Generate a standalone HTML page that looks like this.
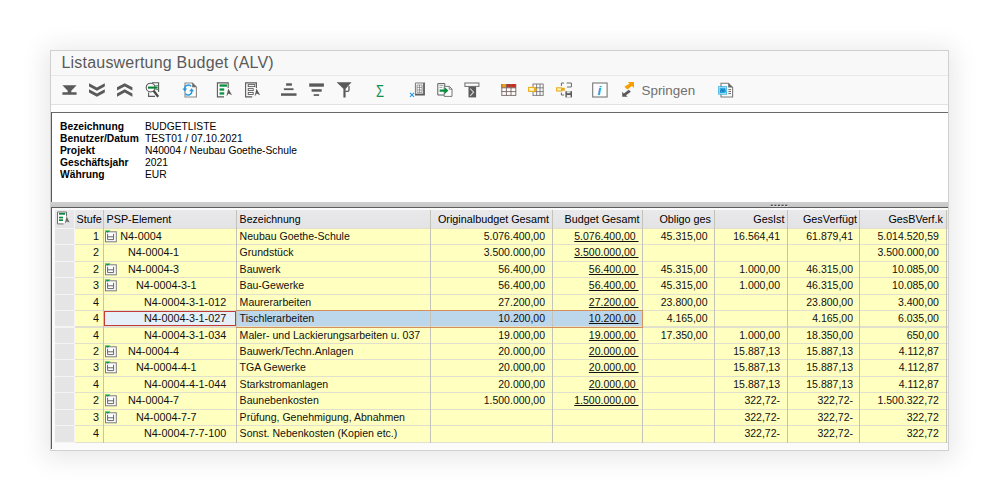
<!DOCTYPE html>
<html><head><meta charset="utf-8"><title>Listauswertung Budget (ALV)</title>
<style>
html,body{margin:0;padding:0;background:#fff;}
body{width:1000px;height:500px;position:relative;overflow:hidden;font-family:"Liberation Sans",sans-serif;font-size:10.8px;color:#111;}
.a{position:absolute;}
#panel{left:50px;top:50px;width:897px;height:398.5px;background:#fdfdfd;border:1px solid #d0d0d0;box-shadow:0 3px 24px 5px rgba(0,0,0,0.095);}
#title{left:51px;top:51px;width:897px;height:24px;background:#f8f8f8;border-bottom:1px solid #e8e8e8;}
#title span{position:absolute;left:10.5px;top:3px;font-size:16px;color:#5a5a5a;letter-spacing:0.2px;white-space:nowrap;}
#tb{left:51px;top:76px;width:897px;height:28px;background:#f9f9f9;border-bottom:1px solid #e2e2e2;}
#spr{left:641.5px;top:83px;font-size:13.4px;color:#707070;line-height:16px;white-space:nowrap;}
#sig{left:375.6px;top:82px;font-size:16.3px;color:#0d9150;line-height:18px;transform:scaleX(0.8);transform-origin:0 0;}
#info{left:51px;top:112px;width:896px;height:89px;background:#fff;border-top:1.5px solid #6a6a6a;border-left:1.5px solid #5a5a5a;}
#info div{position:absolute;left:8px;white-space:nowrap;line-height:12px;height:12px;font-size:11px;color:#000;transform:scaleX(0.934);transform-origin:0 0;}
#info b{position:absolute;left:0;}
#info i{position:absolute;left:91px;font-style:normal;}
#split{left:51px;top:201.7px;width:897px;height:5.2px;background:linear-gradient(#d0d0d0,#c6c6c6);}
#gridbox{left:51px;top:206.7px;width:897px;height:242.8px;background:#fbfbfb;border-top:1.3px solid #5e5e5e;border-left:1.5px solid #5a5a5a;box-sizing:border-box;}
#lines{background:#e0e0cc;}
.vl{top:210px;width:1px;background:#c3c3ba;}
.hd{top:210px;height:18px;background:linear-gradient(#e9e9eb,#e3e3e6);line-height:18px;white-space:nowrap;overflow:hidden;color:#000;}
.c{white-space:nowrap;overflow:hidden;background:#ffffc0;}
.c span{display:block;}
.r{text-align:right;}
.u{text-decoration:underline;text-underline-offset:1.2px;text-decoration-skip-ink:none;text-decoration-thickness:1px;white-space:pre;}
.sel{background:#e5e5e5;}
.hl{background:#bcd6ec;}
</style></head><body>
<div class="a" id="panel"></div>
<div class="a" id="title"><span>Listauswertung Budget (ALV)</span></div>
<div class="a" id="tb"></div>

<svg class="a" style="left:0;top:0" width="1000" height="500" viewBox="0 0 1000 500">
<path fill="#5a5a5a" d="M62.4 85.3H76.6L71.3 90.8V92.2H76.6V94.7H62.4V92.2H67.7V90.8Z"/>
<path fill="#5a5a5a" d="M89 83.2L96.9 87.4L104.8 83.2V86.6L96.9 90.8L89 86.6Z"/>
<path fill="#5a5a5a" d="M89 89.3L96.9 93.5L104.8 89.3V92.6L96.9 96.8L89 92.6Z"/>
<path fill="#5a5a5a" d="M117 90.6L124.7 86.5L132.4 90.6V87.3L124.7 83.2L117 87.3Z"/>
<path fill="#5a5a5a" d="M117 96.7L124.7 92.6L132.4 96.7V93.4L124.7 89.3L117 93.4Z"/>
<g fill="none" stroke="#5a5a5a" stroke-width="1.1"><path d="M152 82.8H158.6V92"/><path d="M148.6 92.6V96.4H155"/><circle cx="150.6" cy="87.6" r="4.4"/></g>
<path d="M153.6 90.8L158.2 96.8" stroke="#4a4a4a" stroke-width="2.3" fill="none"/>
<path d="M148 87.6H157.6" stroke="#0a8236" stroke-width="2.1"/><path d="M155.4 85.6H158M155.4 89.6H158" stroke="#2a9a5a" stroke-width="0.9"/>
<path d="M185 83H192.4L196.4 87V97H185Z" fill="#fdfdfd" stroke="#8a8a8a" stroke-width="1.1"/><path d="M192.2 82.8L196.6 87.2H192.2Z" fill="#6a6a6a"/>
<g fill="none" stroke="#2498de" stroke-width="1.45"><path d="M184.7 89.4A3.7 3.7 0 0 1 191.2 86.4"/><path d="M191.7 90.4A3.7 3.7 0 0 1 185.4 93.8"/></g>
<path d="M182.4 88.6H187.2L184.8 91.6Z" fill="#2498de"/><path d="M189.2 91.2H194L191.6 88.2Z" fill="#2498de"/>
<path d="M228.20000000000002 88V82.9H217.4V96.9H224.0" fill="none" stroke="#5a5a5a" stroke-width="1.1"/>
<rect x="219.6" y="84.4" width="7.4" height="2.3" fill="#0a8f3e"/><rect x="219.6" y="88.4" width="4.6" height="2.3" fill="#0a8f3e"/><rect x="219.6" y="92.3" width="4.6" height="2.3" fill="#0a8f3e"/>
<path d="M228.3 88.6L232.0 95.2L228.6 93.6L226.4 96.4Z" fill="#5a5a5a"/>
<path d="M256.4 88V82.9H245.6V96.9H252.2" fill="none" stroke="#5a5a5a" stroke-width="1.1"/>
<g fill="#fff" stroke="#5a5a5a" stroke-width="0.9"><rect x="248.2" y="84.6" width="6.6" height="2"/><rect x="248.2" y="88.6" width="5" height="2"/><rect x="248.2" y="92.5" width="5" height="2"/></g>
<path d="M256.5 88.6L260.2 95.2L256.8 93.6L254.6 96.4Z" fill="#5a5a5a"/>
<g fill="#5a5a5a"><rect x="286.1" y="83.3" width="5.8" height="2.4"/><rect x="283.9" y="88.3" width="9.6" height="1.8"/><rect x="281" y="93.3" width="15.5" height="2.5"/></g>
<g fill="#5a5a5a"><rect x="309.2" y="83.4" width="14.7" height="3.3"/><rect x="311.6" y="89.2" width="10.1" height="2.5"/><rect x="313.7" y="94.2" width="5.4" height="1.7"/></g>
<path d="M336.6 82.2H351.6L345.6 88.8V97.6H343.4V88.8Z" fill="#5a5a5a"/><path d="M345.4 91.4H347.6Q349 91.4 349 90V86" stroke="#5a5a5a" stroke-width="1.3" fill="none"/>
<path d="M415.4 83H423.4V94H415.4Z" fill="#fff" stroke="#777" stroke-width="1"/><path d="M424.2 82.6V94.8H415" stroke="#5a5a5a" stroke-width="1.4" fill="none"/>
<path d="M417 85H422V92.4H417ZM417 87.4H422M417 90H422M419.5 85V92.4" stroke="#808080" stroke-width="0.8" fill="none"/>
<path d="M410 92.8L414 96.8M414 92.8L410 96.8" stroke="#2a9be8" stroke-width="1.2"/>
<path d="M437.8 83.6H444.8V95H437.8Z" fill="#fcfcfc" stroke="#5a5a5a" stroke-width="1"/><path d="M439.4 85.4H443.4M439.4 87.4H442.4" stroke="#888" stroke-width="0.8"/>
<path d="M444.2 86.4H449.4L452 89V96.4H444.2Z" fill="#fcfcfc" stroke="#777" stroke-width="1"/><path d="M449.2 86.4V89.2H452" stroke="#777" stroke-width="0.9" fill="none"/>
<path d="M439.6 89.4H444.6V87L448.4 90.6L444.6 94.2V91.8H439.6Z" fill="#0a8f3e"/>
<rect x="464.9" y="83" width="14" height="3.4" fill="#fff" stroke="#777" stroke-width="1.1"/><rect x="468.5" y="86.8" width="7.6" height="10.6" fill="#5a5a5a"/><path d="M470.2 88.6L473.6 92.2L470.2 95.8" stroke="#cfcfcf" stroke-width="1.2" fill="none"/>
<rect x="501.4" y="84" width="14.6" height="11.6" fill="#fff"/><rect x="501.4" y="84" width="5" height="3.6" fill="#f0a010"/><rect x="506.4" y="84" width="9.6" height="3.6" fill="#c8301c"/>
<path d="M501.6 87.8H516M501.6 91.6H516M501.6 95.4H516M501.8 84V95.6M506.4 84V95.6M511 84V95.6M515.8 84V95.6" stroke="#756262" stroke-width="0.9" fill="none"/>
<path d="M532.6 84H543.4M532.6 87.8H543.4M532.6 91.6H543.4M532.6 95.4H543.4M533 84V95.6M536.6 84V95.6M540 84V95.6M543.2 84V95.6" stroke="#707070" stroke-width="0.85" fill="none"/>
<rect x="528.6" y="87.4" width="6" height="4" fill="#fff3c0" stroke="#e8b020" stroke-width="1.1"/><path d="M534 87L537.4 89.4L534 91.8Z" fill="#e8a818"/>
<rect x="556.6" y="87.8" width="5" height="3.2" fill="#fff3c0" stroke="#e8b020" stroke-width="1.1"/><path d="M561.4 87.8H564.8V90.8H561.4Z" fill="#e8a818"/>
<path d="M561.4 86V83H564M566.6 83H571.4V87H567M561.4 92.6V95H564" stroke="#6a6a6a" stroke-width="1" fill="none"/>
<rect x="565.4" y="91.2" width="6.6" height="6.2" fill="#5a5a5a"/><rect x="566.8" y="91.2" width="3.6" height="2" fill="#ddd"/><rect x="566.8" y="95" width="3.8" height="2.4" fill="#eee"/>
<rect x="592.7" y="83" width="14.4" height="14" fill="#fdfdfd" stroke="#777" stroke-width="1.1"/>
<text x="599.4" y="94.8" text-anchor="middle" font-family="Liberation Sans, sans-serif" font-style="italic" font-weight="bold" font-size="13.5" fill="#18a2e2">i</text>
<path d="M627.8 82H634V88L631.9 86L627.4 89.6L624.4 86.8L629.6 83.6Z" fill="#f5a000"/>
<path d="M622.2 96.8V91.8L623.9 93.4L628.8 89.8L630.8 91.8L626 95.2L627.6 96.8Z" fill="#5a5a5a"/>
<path d="M721 83.2H728.4L732.6 87.4V97H721Z" fill="#fdfdfd" stroke="#7a7a7a" stroke-width="1.1"/><path d="M728.2 83L732.8 87.6H728.2Z" fill="#666"/>
<path d="M728.4 89.6H731M728.4 91.6H731M728.4 93.6H731" stroke="#555" stroke-width="0.9"/>
<rect x="718.2" y="86.2" width="8.8" height="8.4" fill="#30aee2"/><rect x="719.3" y="87.3" width="6.6" height="6.2" fill="none" stroke="#c8ecf8" stroke-width="0.7"/><path d="M720.2 92.4L721.8 89L723 92L724.4 89L725.4 91.6" stroke="#1a78b8" stroke-width="1" fill="none"/>
</svg>
<div class="a" id="sig">Σ</div>
<div class="a" id="spr">Springen</div>
<div class="a" id="info">
<div style="top:7px"><b>Bezeichnung</b><i>BUDGETLISTE</i></div>
<div style="top:19.1px"><b>Benutzer/Datum</b><i>TEST01 / 07.10.2021</i></div>
<div style="top:31.2px"><b>Projekt</b><i>N40004 / Neubau Goethe-Schule</i></div>
<div style="top:43.3px"><b>Geschäftsjahr</b><i>2021</i></div>
<div style="top:55.4px"><b>Währung</b><i>EUR</i></div>
</div>
<div class="a" id="split"></div>
<svg class="a" style="left:769px;top:203px" width="20" height="5" viewBox="0 0 20 5"><rect x="2.3" y="2.6" width="2.2" height="1.1" fill="#f4f4f4"/><rect x="1.8" y="1.7" width="2.1" height="1.2" fill="#3c3c3c"/><rect x="5.9" y="2.6" width="2.2" height="1.1" fill="#f4f4f4"/><rect x="5.4" y="1.7" width="2.1" height="1.2" fill="#3c3c3c"/><rect x="9.5" y="2.6" width="2.2" height="1.1" fill="#f4f4f4"/><rect x="9.0" y="1.7" width="2.1" height="1.2" fill="#3c3c3c"/><rect x="13.1" y="2.6" width="2.2" height="1.1" fill="#f4f4f4"/><rect x="12.6" y="1.7" width="2.1" height="1.2" fill="#3c3c3c"/><rect x="16.7" y="2.6" width="2.2" height="1.1" fill="#f4f4f4"/><rect x="16.2" y="1.7" width="2.1" height="1.2" fill="#3c3c3c"/></svg>
<div class="a" id="gridbox"></div>

<div class="a" id="lines" style="left:74px;top:210px;width:874px;height:232.77px"></div>
<div class="a" style="left:55px;top:210px;width:20px;height:232.77px;background:#f4f4f4"></div>
<div class="a vl" style="left:103px;height:232.77px"></div>
<div class="a vl" style="left:236px;height:232.77px"></div>
<div class="a vl" style="left:430px;height:232.77px"></div>
<div class="a vl" style="left:551.5px;height:232.77px"></div>
<div class="a vl" style="left:642px;height:232.77px"></div>
<div class="a vl" style="left:714px;height:232.77px"></div>
<div class="a vl" style="left:787px;height:232.77px"></div>
<div class="a vl" style="left:859px;height:232.77px"></div>
<div class="a vl" style="left:945.5px;height:232.77px"></div>
<div class="a hd" style="left:55px;width:19px;"><span style="padding-left:0px"></span></div>
<div class="a hd" style="left:75px;width:28px;"><span style="padding-left:1.5px">Stufe</span></div>
<div class="a hd" style="left:104px;width:132px;"><span style="padding-left:2.5px">PSP-Element</span></div>
<div class="a hd" style="left:237px;width:193px;"><span style="padding-left:2.6px;font-size:10.55px">Bezeichnung</span></div>
<div class="a hd r" style="left:431px;width:120.5px;"><span style="padding-right:2.5px">Originalbudget Gesamt</span></div>
<div class="a hd r" style="left:552.5px;width:89.5px;"><span style="padding-right:2.5px">Budget Gesamt</span></div>
<div class="a hd r" style="left:643px;width:71px;"><span style="padding-right:3px">Obligo ges</span></div>
<div class="a hd r" style="left:715px;width:72px;"><span style="padding-right:2.5px">GesIst</span></div>
<div class="a hd r" style="left:788px;width:71px;"><span style="padding-right:2px">GesVerfügt</span></div>
<div class="a hd r" style="left:860px;width:85.5px;"><span style="padding-right:2.5px">GesBVerf.k</span></div>
<div class="a hd" style="left:946.5px;width:1.5px"></div>
<svg class="a" style="left:55px;top:209px" width="19" height="19" viewBox="55 209 19 19"><path d="M66.5 216.4V212H57.5V223.9H63.6" fill="#fff" stroke="#707070" stroke-width="1"/><rect x="59" y="212.9" width="6.2" height="1.8" fill="#0a8a3c"/><rect x="59" y="216.7" width="4" height="1.7" fill="#0a8a3c"/><rect x="59" y="219.3" width="4" height="1.7" fill="#0a8a3c"/><path d="M66.6 216.2L69.6 222.6L66.8 221.4L64.9 223.4Z" fill="#6a6a6a"/></svg>
<div class="a c sel" style="top:228.70px;height:15.47px;line-height:14.17px;left:55px;width:19px"></div>
<div class="a c r" style="top:228.70px;height:15.47px;line-height:14.17px;left:75px;width:28px"><span style="padding-right:4px">1</span></div>
<div class="a c" style="top:228.70px;height:15.47px;line-height:14.17px;left:104px;width:132px"><span style="position:absolute;left:16.299999999999997px">N4-0004</span></div>
<svg class="a" style="left:104px;top:228.7px" width="14" height="16" viewBox="104 228.7 14 16"><rect x="105.5" y="231.5" width="10.8" height="10" fill="#fff" stroke="#7a7a80" stroke-width="1"/><path d="M107.6 233.5V239.3H113.6V233.5M107.6 236.5H113.6" fill="none" stroke="#666" stroke-width="1"/><path d="M104.6 230.1H110.6L107.6 232.5Z" fill="#0a9a48"/></svg>
<div class="a c" style="top:228.70px;height:15.47px;line-height:14.17px;left:237px;width:193px"><span style="padding-left:2.6px;font-size:10.55px">Neubau Goethe-Schule</span></div>
<div class="a c r" style="top:228.70px;height:15.47px;line-height:14.17px;left:431px;width:120.5px"><span style="padding-right:6.5px;font-size:10.5px">5.076.400,00</span></div>
<div class="a c r" style="top:228.70px;height:15.47px;line-height:14.17px;left:552.5px;width:89.5px"><span style="padding-right:3.5px;font-size:10.5px"><span class="u" style="display:inline">5.076.400,00 </span></span></div>
<div class="a c r" style="top:228.70px;height:15.47px;line-height:14.17px;left:643px;width:71px"><span style="padding-right:6.5px;font-size:10.5px">45.315,00</span></div>
<div class="a c r" style="top:228.70px;height:15.47px;line-height:14.17px;left:715px;width:72px"><span style="padding-right:7px;font-size:10.5px">16.564,41</span></div>
<div class="a c r" style="top:228.70px;height:15.47px;line-height:14.17px;left:788px;width:71px"><span style="padding-right:6px;font-size:10.5px">61.879,41</span></div>
<div class="a c r" style="top:228.70px;height:15.47px;line-height:14.17px;left:860px;width:85.5px"><span style="padding-right:6.7px;font-size:10.5px">5.014.520,59</span></div>
<div class="a c" style="top:228.70px;height:15.47px;line-height:14.17px;left:946.5px;width:1.5px"></div>
<div class="a c sel" style="top:245.17px;height:15.47px;line-height:14.29px;left:55px;width:19px"></div>
<div class="a c r" style="top:245.17px;height:15.47px;line-height:14.29px;left:75px;width:28px"><span style="padding-right:4px">2</span></div>
<div class="a c" style="top:245.17px;height:15.47px;line-height:14.29px;left:104px;width:132px"><span style="position:absolute;left:24px">N4-0004-1</span></div>
<div class="a c" style="top:245.17px;height:15.47px;line-height:14.29px;left:237px;width:193px"><span style="padding-left:2.6px;font-size:10.55px">Grundstück</span></div>
<div class="a c r" style="top:245.17px;height:15.47px;line-height:14.29px;left:431px;width:120.5px"><span style="padding-right:6.5px;font-size:10.5px">3.500.000,00</span></div>
<div class="a c r" style="top:245.17px;height:15.47px;line-height:14.29px;left:552.5px;width:89.5px"><span style="padding-right:3.5px;font-size:10.5px"><span class="u" style="display:inline">3.500.000,00 </span></span></div>
<div class="a c r" style="top:245.17px;height:15.47px;line-height:14.29px;left:643px;width:71px"><span style="padding-right:6.5px;font-size:10.5px"></span></div>
<div class="a c r" style="top:245.17px;height:15.47px;line-height:14.29px;left:715px;width:72px"><span style="padding-right:7px;font-size:10.5px"></span></div>
<div class="a c r" style="top:245.17px;height:15.47px;line-height:14.29px;left:788px;width:71px"><span style="padding-right:6px;font-size:10.5px"></span></div>
<div class="a c r" style="top:245.17px;height:15.47px;line-height:14.29px;left:860px;width:85.5px"><span style="padding-right:6.7px;font-size:10.5px">3.500.000,00</span></div>
<div class="a c" style="top:245.17px;height:15.47px;line-height:14.29px;left:946.5px;width:1.5px"></div>
<div class="a c sel" style="top:261.63px;height:15.47px;line-height:14.42px;left:55px;width:19px"></div>
<div class="a c r" style="top:261.63px;height:15.47px;line-height:14.42px;left:75px;width:28px"><span style="padding-right:4px">2</span></div>
<div class="a c" style="top:261.63px;height:15.47px;line-height:14.42px;left:104px;width:132px"><span style="position:absolute;left:24px">N4-0004-3</span></div>
<svg class="a" style="left:104px;top:261.63px" width="14" height="16" viewBox="104 261.63 14 16"><rect x="105.5" y="264.43" width="10.8" height="10" fill="#fff" stroke="#7a7a80" stroke-width="1"/><path d="M107.6 266.43V272.23H113.6V266.43M107.6 269.43H113.6" fill="none" stroke="#666" stroke-width="1"/><path d="M104.6 263.03000000000003H110.6L107.6 265.43Z" fill="#0a9a48"/></svg>
<div class="a c" style="top:261.63px;height:15.47px;line-height:14.42px;left:237px;width:193px"><span style="padding-left:2.6px;font-size:10.55px">Bauwerk</span></div>
<div class="a c r" style="top:261.63px;height:15.47px;line-height:14.42px;left:431px;width:120.5px"><span style="padding-right:6.5px;font-size:10.5px">56.400,00</span></div>
<div class="a c r" style="top:261.63px;height:15.47px;line-height:14.42px;left:552.5px;width:89.5px"><span style="padding-right:3.5px;font-size:10.5px"><span class="u" style="display:inline">56.400,00 </span></span></div>
<div class="a c r" style="top:261.63px;height:15.47px;line-height:14.42px;left:643px;width:71px"><span style="padding-right:6.5px;font-size:10.5px">45.315,00</span></div>
<div class="a c r" style="top:261.63px;height:15.47px;line-height:14.42px;left:715px;width:72px"><span style="padding-right:7px;font-size:10.5px">1.000,00</span></div>
<div class="a c r" style="top:261.63px;height:15.47px;line-height:14.42px;left:788px;width:71px"><span style="padding-right:6px;font-size:10.5px">46.315,00</span></div>
<div class="a c r" style="top:261.63px;height:15.47px;line-height:14.42px;left:860px;width:85.5px"><span style="padding-right:6.7px;font-size:10.5px">10.085,00</span></div>
<div class="a c" style="top:261.63px;height:15.47px;line-height:14.42px;left:946.5px;width:1.5px"></div>
<div class="a c sel" style="top:278.10px;height:15.47px;line-height:14.54px;left:55px;width:19px"></div>
<div class="a c r" style="top:278.10px;height:15.47px;line-height:14.54px;left:75px;width:28px"><span style="padding-right:4px">3</span></div>
<div class="a c" style="top:278.10px;height:15.47px;line-height:14.54px;left:104px;width:132px"><span style="position:absolute;left:32px">N4-0004-3-1</span></div>
<svg class="a" style="left:104px;top:278.1px" width="14" height="16" viewBox="104 278.1 14 16"><rect x="105.5" y="280.90000000000003" width="10.8" height="10" fill="#fff" stroke="#7a7a80" stroke-width="1"/><path d="M107.6 282.90000000000003V288.70000000000005H113.6V282.90000000000003M107.6 285.90000000000003H113.6" fill="none" stroke="#666" stroke-width="1"/><path d="M104.6 279.50000000000006H110.6L107.6 281.90000000000003Z" fill="#0a9a48"/></svg>
<div class="a c" style="top:278.10px;height:15.47px;line-height:14.54px;left:237px;width:193px"><span style="padding-left:2.6px;font-size:10.55px">Bau-Gewerke</span></div>
<div class="a c r" style="top:278.10px;height:15.47px;line-height:14.54px;left:431px;width:120.5px"><span style="padding-right:6.5px;font-size:10.5px">56.400,00</span></div>
<div class="a c r" style="top:278.10px;height:15.47px;line-height:14.54px;left:552.5px;width:89.5px"><span style="padding-right:3.5px;font-size:10.5px"><span class="u" style="display:inline">56.400,00 </span></span></div>
<div class="a c r" style="top:278.10px;height:15.47px;line-height:14.54px;left:643px;width:71px"><span style="padding-right:6.5px;font-size:10.5px">45.315,00</span></div>
<div class="a c r" style="top:278.10px;height:15.47px;line-height:14.54px;left:715px;width:72px"><span style="padding-right:7px;font-size:10.5px">1.000,00</span></div>
<div class="a c r" style="top:278.10px;height:15.47px;line-height:14.54px;left:788px;width:71px"><span style="padding-right:6px;font-size:10.5px">46.315,00</span></div>
<div class="a c r" style="top:278.10px;height:15.47px;line-height:14.54px;left:860px;width:85.5px"><span style="padding-right:6.7px;font-size:10.5px">10.085,00</span></div>
<div class="a c" style="top:278.10px;height:15.47px;line-height:14.54px;left:946.5px;width:1.5px"></div>
<div class="a c sel" style="top:294.57px;height:15.47px;line-height:14.67px;left:55px;width:19px"></div>
<div class="a c r" style="top:294.57px;height:15.47px;line-height:14.67px;left:75px;width:28px"><span style="padding-right:4px">4</span></div>
<div class="a c" style="top:294.57px;height:15.47px;line-height:14.67px;left:104px;width:132px"><span style="position:absolute;left:40px">N4-0004-3-1-012</span></div>
<div class="a c" style="top:294.57px;height:15.47px;line-height:14.67px;left:237px;width:193px"><span style="padding-left:2.6px;font-size:10.55px">Maurerarbeiten</span></div>
<div class="a c r" style="top:294.57px;height:15.47px;line-height:14.67px;left:431px;width:120.5px"><span style="padding-right:6.5px;font-size:10.5px">27.200,00</span></div>
<div class="a c r" style="top:294.57px;height:15.47px;line-height:14.67px;left:552.5px;width:89.5px"><span style="padding-right:3.5px;font-size:10.5px"><span class="u" style="display:inline">27.200,00 </span></span></div>
<div class="a c r" style="top:294.57px;height:15.47px;line-height:14.67px;left:643px;width:71px"><span style="padding-right:6.5px;font-size:10.5px">23.800,00</span></div>
<div class="a c r" style="top:294.57px;height:15.47px;line-height:14.67px;left:715px;width:72px"><span style="padding-right:7px;font-size:10.5px"></span></div>
<div class="a c r" style="top:294.57px;height:15.47px;line-height:14.67px;left:788px;width:71px"><span style="padding-right:6px;font-size:10.5px">23.800,00</span></div>
<div class="a c r" style="top:294.57px;height:15.47px;line-height:14.67px;left:860px;width:85.5px"><span style="padding-right:6.7px;font-size:10.5px">3.400,00</span></div>
<div class="a c" style="top:294.57px;height:15.47px;line-height:14.67px;left:946.5px;width:1.5px"></div>
<div class="a c sel" style="top:311.03px;height:15.47px;line-height:14.79px;left:55px;width:19px"></div>
<div class="a c r" style="top:311.03px;height:15.47px;line-height:14.79px;left:75px;width:28px"><span style="padding-right:4px">4</span></div>
<div class="a c" style="top:311.03px;height:15.47px;line-height:14.79px;background:#e6eef7;box-shadow:inset 0 0 0 1px #c23a3a;left:104px;width:132px"><span style="position:absolute;left:40px">N4-0004-3-1-027</span></div>
<div class="a c hl" style="top:311.03px;height:15.47px;line-height:14.79px;left:237px;width:193px"><span style="padding-left:2.6px;font-size:10.55px">Tischlerarbeiten</span></div>
<div class="a c hl r" style="top:311.03px;height:15.47px;line-height:14.79px;left:431px;width:120.5px"><span style="padding-right:6.5px;font-size:10.5px">10.200,00</span></div>
<div class="a c hl r" style="top:311.03px;height:15.47px;line-height:14.79px;left:552.5px;width:89.5px"><span style="padding-right:3.5px;font-size:10.5px"><span class="u" style="display:inline">10.200,00 </span></span></div>
<div class="a c r" style="top:311.03px;height:15.47px;line-height:14.79px;left:643px;width:71px"><span style="padding-right:6.5px;font-size:10.5px">4.165,00</span></div>
<div class="a c r" style="top:311.03px;height:15.47px;line-height:14.79px;left:715px;width:72px"><span style="padding-right:7px;font-size:10.5px"></span></div>
<div class="a c r" style="top:311.03px;height:15.47px;line-height:14.79px;left:788px;width:71px"><span style="padding-right:6px;font-size:10.5px">4.165,00</span></div>
<div class="a c r" style="top:311.03px;height:15.47px;line-height:14.79px;left:860px;width:85.5px"><span style="padding-right:6.7px;font-size:10.5px">6.035,00</span></div>
<div class="a c" style="top:311.03px;height:15.47px;line-height:14.79px;left:946.5px;width:1.5px"></div>
<div class="a" style="left:236px;top:310.03px;width:406px;height:16.47px;border:1px solid #d4905a;border-left:none;box-sizing:content-box"></div>
<div class="a c sel" style="top:327.50px;height:15.47px;line-height:14.92px;left:55px;width:19px"></div>
<div class="a c r" style="top:327.50px;height:15.47px;line-height:14.92px;left:75px;width:28px"><span style="padding-right:4px">4</span></div>
<div class="a c" style="top:327.50px;height:15.47px;line-height:14.92px;left:104px;width:132px"><span style="position:absolute;left:40px">N4-0004-3-1-034</span></div>
<div class="a c" style="top:327.50px;height:15.47px;line-height:14.92px;left:237px;width:193px"><span style="padding-left:2.6px;font-size:10.55px">Maler- und Lackierungsarbeiten u. 037</span></div>
<div class="a c r" style="top:327.50px;height:15.47px;line-height:14.92px;left:431px;width:120.5px"><span style="padding-right:6.5px;font-size:10.5px">19.000,00</span></div>
<div class="a c r" style="top:327.50px;height:15.47px;line-height:14.92px;left:552.5px;width:89.5px"><span style="padding-right:3.5px;font-size:10.5px"><span class="u" style="display:inline">19.000,00 </span></span></div>
<div class="a c r" style="top:327.50px;height:15.47px;line-height:14.92px;left:643px;width:71px"><span style="padding-right:6.5px;font-size:10.5px">17.350,00</span></div>
<div class="a c r" style="top:327.50px;height:15.47px;line-height:14.92px;left:715px;width:72px"><span style="padding-right:7px;font-size:10.5px">1.000,00</span></div>
<div class="a c r" style="top:327.50px;height:15.47px;line-height:14.92px;left:788px;width:71px"><span style="padding-right:6px;font-size:10.5px">18.350,00</span></div>
<div class="a c r" style="top:327.50px;height:15.47px;line-height:14.92px;left:860px;width:85.5px"><span style="padding-right:6.7px;font-size:10.5px">650,00</span></div>
<div class="a c" style="top:327.50px;height:15.47px;line-height:14.92px;left:946.5px;width:1.5px"></div>
<div class="a c sel" style="top:343.97px;height:15.47px;line-height:15.04px;left:55px;width:19px"></div>
<div class="a c r" style="top:343.97px;height:15.47px;line-height:15.04px;left:75px;width:28px"><span style="padding-right:4px">2</span></div>
<div class="a c" style="top:343.97px;height:15.47px;line-height:15.04px;left:104px;width:132px"><span style="position:absolute;left:24px">N4-0004-4</span></div>
<svg class="a" style="left:104px;top:343.97px" width="14" height="16" viewBox="104 343.97 14 16"><rect x="105.5" y="346.77000000000004" width="10.8" height="10" fill="#fff" stroke="#7a7a80" stroke-width="1"/><path d="M107.6 348.77000000000004V354.57000000000005H113.6V348.77000000000004M107.6 351.77000000000004H113.6" fill="none" stroke="#666" stroke-width="1"/><path d="M104.6 345.37000000000006H110.6L107.6 347.77000000000004Z" fill="#0a9a48"/></svg>
<div class="a c" style="top:343.97px;height:15.47px;line-height:15.04px;left:237px;width:193px"><span style="padding-left:2.6px;font-size:10.55px">Bauwerk/Techn.Anlagen</span></div>
<div class="a c r" style="top:343.97px;height:15.47px;line-height:15.04px;left:431px;width:120.5px"><span style="padding-right:6.5px;font-size:10.5px">20.000,00</span></div>
<div class="a c r" style="top:343.97px;height:15.47px;line-height:15.04px;left:552.5px;width:89.5px"><span style="padding-right:3.5px;font-size:10.5px"><span class="u" style="display:inline">20.000,00 </span></span></div>
<div class="a c r" style="top:343.97px;height:15.47px;line-height:15.04px;left:643px;width:71px"><span style="padding-right:6.5px;font-size:10.5px"></span></div>
<div class="a c r" style="top:343.97px;height:15.47px;line-height:15.04px;left:715px;width:72px"><span style="padding-right:7px;font-size:10.5px">15.887,13</span></div>
<div class="a c r" style="top:343.97px;height:15.47px;line-height:15.04px;left:788px;width:71px"><span style="padding-right:6px;font-size:10.5px">15.887,13</span></div>
<div class="a c r" style="top:343.97px;height:15.47px;line-height:15.04px;left:860px;width:85.5px"><span style="padding-right:6.7px;font-size:10.5px">4.112,87</span></div>
<div class="a c" style="top:343.97px;height:15.47px;line-height:15.04px;left:946.5px;width:1.5px"></div>
<div class="a c sel" style="top:360.44px;height:15.47px;line-height:15.17px;left:55px;width:19px"></div>
<div class="a c r" style="top:360.44px;height:15.47px;line-height:15.17px;left:75px;width:28px"><span style="padding-right:4px">3</span></div>
<div class="a c" style="top:360.44px;height:15.47px;line-height:15.17px;left:104px;width:132px"><span style="position:absolute;left:32px">N4-0004-4-1</span></div>
<svg class="a" style="left:104px;top:360.44px" width="14" height="16" viewBox="104 360.44 14 16"><rect x="105.5" y="363.24" width="10.8" height="10" fill="#fff" stroke="#7a7a80" stroke-width="1"/><path d="M107.6 365.24V371.04H113.6V365.24M107.6 368.24H113.6" fill="none" stroke="#666" stroke-width="1"/><path d="M104.6 361.84000000000003H110.6L107.6 364.24Z" fill="#0a9a48"/></svg>
<div class="a c" style="top:360.44px;height:15.47px;line-height:15.17px;left:237px;width:193px"><span style="padding-left:2.6px;font-size:10.55px">TGA Gewerke</span></div>
<div class="a c r" style="top:360.44px;height:15.47px;line-height:15.17px;left:431px;width:120.5px"><span style="padding-right:6.5px;font-size:10.5px">20.000,00</span></div>
<div class="a c r" style="top:360.44px;height:15.47px;line-height:15.17px;left:552.5px;width:89.5px"><span style="padding-right:3.5px;font-size:10.5px"><span class="u" style="display:inline">20.000,00 </span></span></div>
<div class="a c r" style="top:360.44px;height:15.47px;line-height:15.17px;left:643px;width:71px"><span style="padding-right:6.5px;font-size:10.5px"></span></div>
<div class="a c r" style="top:360.44px;height:15.47px;line-height:15.17px;left:715px;width:72px"><span style="padding-right:7px;font-size:10.5px">15.887,13</span></div>
<div class="a c r" style="top:360.44px;height:15.47px;line-height:15.17px;left:788px;width:71px"><span style="padding-right:6px;font-size:10.5px">15.887,13</span></div>
<div class="a c r" style="top:360.44px;height:15.47px;line-height:15.17px;left:860px;width:85.5px"><span style="padding-right:6.7px;font-size:10.5px">4.112,87</span></div>
<div class="a c" style="top:360.44px;height:15.47px;line-height:15.17px;left:946.5px;width:1.5px"></div>
<div class="a c sel" style="top:376.90px;height:15.47px;line-height:15.29px;left:55px;width:19px"></div>
<div class="a c r" style="top:376.90px;height:15.47px;line-height:15.29px;left:75px;width:28px"><span style="padding-right:4px">4</span></div>
<div class="a c" style="top:376.90px;height:15.47px;line-height:15.29px;left:104px;width:132px"><span style="position:absolute;left:40px">N4-0004-4-1-044</span></div>
<div class="a c" style="top:376.90px;height:15.47px;line-height:15.29px;left:237px;width:193px"><span style="padding-left:2.6px;font-size:10.55px">Starkstromanlagen</span></div>
<div class="a c r" style="top:376.90px;height:15.47px;line-height:15.29px;left:431px;width:120.5px"><span style="padding-right:6.5px;font-size:10.5px">20.000,00</span></div>
<div class="a c r" style="top:376.90px;height:15.47px;line-height:15.29px;left:552.5px;width:89.5px"><span style="padding-right:3.5px;font-size:10.5px"><span class="u" style="display:inline">20.000,00 </span></span></div>
<div class="a c r" style="top:376.90px;height:15.47px;line-height:15.29px;left:643px;width:71px"><span style="padding-right:6.5px;font-size:10.5px"></span></div>
<div class="a c r" style="top:376.90px;height:15.47px;line-height:15.29px;left:715px;width:72px"><span style="padding-right:7px;font-size:10.5px">15.887,13</span></div>
<div class="a c r" style="top:376.90px;height:15.47px;line-height:15.29px;left:788px;width:71px"><span style="padding-right:6px;font-size:10.5px">15.887,13</span></div>
<div class="a c r" style="top:376.90px;height:15.47px;line-height:15.29px;left:860px;width:85.5px"><span style="padding-right:6.7px;font-size:10.5px">4.112,87</span></div>
<div class="a c" style="top:376.90px;height:15.47px;line-height:15.29px;left:946.5px;width:1.5px"></div>
<div class="a c sel" style="top:393.37px;height:15.47px;line-height:15.42px;left:55px;width:19px"></div>
<div class="a c r" style="top:393.37px;height:15.47px;line-height:15.42px;left:75px;width:28px"><span style="padding-right:4px">2</span></div>
<div class="a c" style="top:393.37px;height:15.47px;line-height:15.42px;left:104px;width:132px"><span style="position:absolute;left:24px">N4-0004-7</span></div>
<svg class="a" style="left:104px;top:393.37px" width="14" height="16" viewBox="104 393.37 14 16"><rect x="105.5" y="396.17" width="10.8" height="10" fill="#fff" stroke="#7a7a80" stroke-width="1"/><path d="M107.6 398.17V403.97H113.6V398.17M107.6 401.17H113.6" fill="none" stroke="#666" stroke-width="1"/><path d="M104.6 394.77000000000004H110.6L107.6 397.17Z" fill="#0a9a48"/></svg>
<div class="a c" style="top:393.37px;height:15.47px;line-height:15.42px;left:237px;width:193px"><span style="padding-left:2.6px;font-size:10.55px">Baunebenkosten</span></div>
<div class="a c r" style="top:393.37px;height:15.47px;line-height:15.42px;left:431px;width:120.5px"><span style="padding-right:6.5px;font-size:10.5px">1.500.000,00</span></div>
<div class="a c r" style="top:393.37px;height:15.47px;line-height:15.42px;left:552.5px;width:89.5px"><span style="padding-right:3.5px;font-size:10.5px"><span class="u" style="display:inline">1.500.000,00 </span></span></div>
<div class="a c r" style="top:393.37px;height:15.47px;line-height:15.42px;left:643px;width:71px"><span style="padding-right:6.5px;font-size:10.5px"></span></div>
<div class="a c r" style="top:393.37px;height:15.47px;line-height:15.42px;left:715px;width:72px"><span style="padding-right:7px;font-size:10.5px">322,72-</span></div>
<div class="a c r" style="top:393.37px;height:15.47px;line-height:15.42px;left:788px;width:71px"><span style="padding-right:6px;font-size:10.5px">322,72-</span></div>
<div class="a c r" style="top:393.37px;height:15.47px;line-height:15.42px;left:860px;width:85.5px"><span style="padding-right:6.7px;font-size:10.5px">1.500.322,72</span></div>
<div class="a c" style="top:393.37px;height:15.47px;line-height:15.42px;left:946.5px;width:1.5px"></div>
<div class="a c sel" style="top:409.84px;height:15.47px;line-height:15.54px;left:55px;width:19px"></div>
<div class="a c r" style="top:409.84px;height:15.47px;line-height:15.54px;left:75px;width:28px"><span style="padding-right:4px">3</span></div>
<div class="a c" style="top:409.84px;height:15.47px;line-height:15.54px;left:104px;width:132px"><span style="position:absolute;left:32px">N4-0004-7-7</span></div>
<svg class="a" style="left:104px;top:409.84px" width="14" height="16" viewBox="104 409.84 14 16"><rect x="105.5" y="412.64" width="10.8" height="10" fill="#fff" stroke="#7a7a80" stroke-width="1"/><path d="M107.6 414.64V420.44H113.6V414.64M107.6 417.64H113.6" fill="none" stroke="#666" stroke-width="1"/><path d="M104.6 411.24H110.6L107.6 413.64Z" fill="#0a9a48"/></svg>
<div class="a c" style="top:409.84px;height:15.47px;line-height:15.54px;left:237px;width:193px"><span style="padding-left:2.6px;font-size:10.55px">Prüfung, Genehmigung, Abnahmen</span></div>
<div class="a c r" style="top:409.84px;height:15.47px;line-height:15.54px;left:431px;width:120.5px"><span style="padding-right:6.5px;font-size:10.5px"></span></div>
<div class="a c r" style="top:409.84px;height:15.47px;line-height:15.54px;left:552.5px;width:89.5px"><span style="padding-right:6.5px;font-size:10.5px"></span></div>
<div class="a c r" style="top:409.84px;height:15.47px;line-height:15.54px;left:643px;width:71px"><span style="padding-right:6.5px;font-size:10.5px"></span></div>
<div class="a c r" style="top:409.84px;height:15.47px;line-height:15.54px;left:715px;width:72px"><span style="padding-right:7px;font-size:10.5px">322,72-</span></div>
<div class="a c r" style="top:409.84px;height:15.47px;line-height:15.54px;left:788px;width:71px"><span style="padding-right:6px;font-size:10.5px">322,72-</span></div>
<div class="a c r" style="top:409.84px;height:15.47px;line-height:15.54px;left:860px;width:85.5px"><span style="padding-right:6.7px;font-size:10.5px">322,72</span></div>
<div class="a c" style="top:409.84px;height:15.47px;line-height:15.54px;left:946.5px;width:1.5px"></div>
<div class="a c sel" style="top:426.30px;height:15.47px;line-height:15.67px;left:55px;width:19px"></div>
<div class="a c r" style="top:426.30px;height:15.47px;line-height:15.67px;left:75px;width:28px"><span style="padding-right:4px">4</span></div>
<div class="a c" style="top:426.30px;height:15.47px;line-height:15.67px;left:104px;width:132px"><span style="position:absolute;left:40px">N4-0004-7-7-100</span></div>
<div class="a c" style="top:426.30px;height:15.47px;line-height:15.67px;left:237px;width:193px"><span style="padding-left:2.6px;font-size:10.55px">Sonst. Nebenkosten (Kopien etc.)</span></div>
<div class="a c r" style="top:426.30px;height:15.47px;line-height:15.67px;left:431px;width:120.5px"><span style="padding-right:6.5px;font-size:10.5px"></span></div>
<div class="a c r" style="top:426.30px;height:15.47px;line-height:15.67px;left:552.5px;width:89.5px"><span style="padding-right:6.5px;font-size:10.5px"></span></div>
<div class="a c r" style="top:426.30px;height:15.47px;line-height:15.67px;left:643px;width:71px"><span style="padding-right:6.5px;font-size:10.5px"></span></div>
<div class="a c r" style="top:426.30px;height:15.47px;line-height:15.67px;left:715px;width:72px"><span style="padding-right:7px;font-size:10.5px">322,72-</span></div>
<div class="a c r" style="top:426.30px;height:15.47px;line-height:15.67px;left:788px;width:71px"><span style="padding-right:6px;font-size:10.5px">322,72-</span></div>
<div class="a c r" style="top:426.30px;height:15.47px;line-height:15.67px;left:860px;width:85.5px"><span style="padding-right:6.7px;font-size:10.5px">322,72</span></div>
<div class="a c" style="top:426.30px;height:15.47px;line-height:15.67px;left:946.5px;width:1.5px"></div>
</body></html>
